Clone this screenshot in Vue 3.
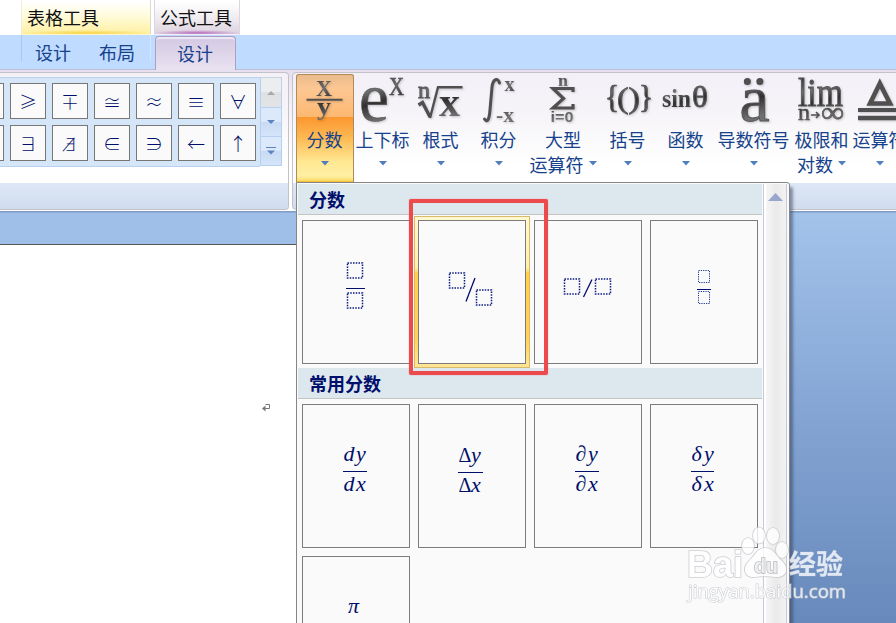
<script setup>
const symbols = [
  ['≤', '≥', '∓', '≅', '≈', '≡', '∀'],
  ['∪', '∃', '∄', '∈', '∋', '←', '↑'],
]

// Each glyph: t text, x left edge, y baseline, s size, w drawn length, b weight, f font
const serif = 'Liberation Serif'
const commands = [
  { id: 'frac', w: 58, l1: '分数', active: true,
    g: [{ t: 'X', x: 20, y: 22, s: 24, w: 16, b: 700 }, { t: 'y', x: 21, y: 41, s: 25, w: 14, b: 700 }],
    p: [{ d: 'M10.5 25.7H46.5', sw: 2 }] },
  { id: 'script', w: 58, l1: '上下标',
    g: [{ t: 'e', x: 5, y: 46.5, s: 69, w: 30, b: 400, st: 0.6 }, { t: 'X', x: 35, y: 20.5, s: 25, w: 15, b: 400, st: 0.6 }] },
  { id: 'root', w: 58, l1: '根式',
    g: [{ t: 'n', x: 6, y: 24, s: 24, w: 12, b: 400, st: 0.8 }, { t: 'x', x: 27, y: 41.5, s: 43, w: 21, b: 700 }],
    p: [{ d: 'M6.5 31L10.5 28.5L18 43', sw: 3.4 }, { d: 'M18 44L26 13.2H50.5', sw: 2.4 }] },
  { id: 'int', w: 58, l1: '积分',
    g: [{ t: 'x', x: 34.5, y: 16.5, s: 20, w: 10, b: 700 }, { t: '-x', x: 26, y: 47.5, s: 20, w: 18, b: 700 }],
    p: [{ d: 'M29.5 9C28 3.5 23 4.5 22 13L19.8 38C19 46 17 49 14.5 45', sw: 3 }] },
  { id: 'sum', w: 71, l1: '大型', l2: '运算符',
    g: [{ t: 'n', x: 30, y: 12, s: 17, w: 10, b: 700 }, { t: 'i=0', x: 22.5, y: 47.5, s: 14, w: 23, b: 700, f: 'Liberation Sans' }],
    p: [{ d: 'M45 18V14.5H25L35.5 24.5L25 34H45V30', sw: 3.2 }] },
  { id: 'brace', w: 58, l1: '括号',
    g: [{ t: '{', x: 6, y: 34, s: 31, w: 14, b: 400, st: 1 }, { t: '()', x: 18, y: 33.5, s: 29, w: 23, b: 400, st: 0.8 }, { t: '}', x: 40, y: 34, s: 31, w: 14, b: 400, st: 1 }] },
  { id: 'func', w: 58, l1: '函数',
    g: [{ t: 'sin', x: 5, y: 33, s: 25, w: 29, b: 700 }, { t: 'θ', x: 35, y: 33, s: 29, w: 16, b: 400, st: 0.9 }] },
  { id: 'accent', w: 78, l1: '导数符号',
    g: [{ t: 'a', x: 24.5, y: 46.5, s: 66, w: 30, b: 400, st: 1 }],
    p: [{ d: 'M32.3 7.5h.1M44.8 7.5h.1', sw: 7 }] },
  { id: 'limit', w: 58, l1: '极限和', l2: '对数',
    g: [{ t: 'lim', x: 5, y: 32, s: 39, w: 45, b: 400, st: 0.9 }, { t: 'n', x: 5, y: 46, s: 24, w: 12, b: 400, st: 0.6 }, { t: '∞', x: 28, y: 47.5, s: 29, w: 23, b: 400, st: 0.6 }],
    p: [{ d: 'M18 41h8M23 38l3 3l-3 3', sw: 1.6 }] },
  { id: 'oper', w: 58, l1: '运算符',
    g: [],
    p: [{ d: 'M28.8 9.5L19 29.5H39Z', sw: 4.6 }, { d: 'M7 36H51', sw: 4 }, { d: 'M7 44H51', sw: 4.6 }] },
]

const placeholders = [
  { boxes: [[44.5, 42, 15, 15], [44.5, 72, 15, 15]], line: 'M43 68.5H62' },
  { boxes: [[30.5, 52, 15, 15], [57.5, 69, 15, 15]], slash: 'M47 80.5L56 57', selected: true },
  { boxes: [[29.5, 58, 15, 15], [60.5, 58, 15, 15]], slash: 'M48.5 76L57 58.5' },
  { boxes: [[47.5, 49.5, 11, 12], [47.5, 70.5, 11, 12]], line: 'M46 69.5H60', small: true },
]

const common = [
  { a: 'd', x: 41, dy: 0, w: 24 },
  { a: 'Δ', x: 40, dy: 1, w: 25, upright: true },
  { a: '∂', x: 41, dy: 0, w: 24 },
  { a: 'δ', x: 41, dy: 0, w: 23 },
]
</script>

<template>
  <div class="window">
    <header class="titles">
      <div class="ctx table">表格工具</div>
      <div class="ctx equation">公式工具</div>
    </header>
    <nav class="tabs">
      <span class="tab t1">设计</span>
      <span class="tab t2">布局</span>
      <span class="tab current">设计</span>
    </nav>
    <section class="ribbon">
      <div class="group symbols">
        <div class="gallery">
          <div v-for="(row, r) in symbols" :key="r" class="symrow">
            <span v-for="s in row" :key="s" class="sym">{{ s }}</span>
          </div>
        </div>
        <div class="spin">
          <button class="off"><svg width="8" height="4"><path d="M0 4L4 0L8 4Z" fill="#a9a9a9" /></svg></button>
          <button><svg width="8" height="4"><path d="M0 0H8L4 4Z" fill="#5c85c0" /></svg></button>
          <button><svg width="10" height="8"><path d="M0 .5H10" stroke="#5c85c0" /><path d="M1 3.5H9L5 7.5Z" fill="#5c85c0" /></svg></button>
        </div>
      </div>
      <div class="group structures">
        <div v-for="c in commands" :key="c.id" class="cmd" :class="{ active: c.active }" :style="{ width: c.w + 'px' }">
          <svg class="icon" :width="c.w" height="54">
            <defs>
              <linearGradient :id="'g-' + c.id" gradientUnits="userSpaceOnUse" x1="0" y1="4" x2="12" y2="50">
                <stop offset="0" stop-color="#333" /><stop offset=".35" stop-color="#6e6e6e" />
                <stop offset=".62" stop-color="#303030" /><stop offset="1" stop-color="#707070" />
              </linearGradient>
            </defs>
            <text v-for="(g, i) in c.g" :key="i" :x="g.x" :y="g.y" :font-size="g.s" :font-weight="g.b"
              :font-family="g.f || serif" :textLength="g.w" lengthAdjust="spacingAndGlyphs"
              :fill="`url(#g-${c.id})`" :stroke="g.st ? '#555' : 'none'" :stroke-width="g.st || 0">{{ g.t }}</text>
            <path v-for="(p, i) in c.p || []" :key="'p' + i" :d="p.d" :stroke-width="p.sw" fill="none" stroke="#505050"
              :stroke-linecap="c.id === 'accent' || c.id === 'int' ? 'round' : 'butt'" />
          </svg>
          <div class="label">{{ c.l1 }}</div>
          <div class="label second">
            <span v-if="c.l2">{{ c.l2 }}</span>
            <svg width="8" height="5"><path d="M0 0H8L4 4.5Z" fill="#4f7dc0" /></svg>
          </div>
        </div>
      </div>
    </section>
    <main class="workspace">
      <div class="document"><svg class="mark" width="8" height="9"><path d="M3.5 .5H7.5V4.5H2" fill="none" stroke="#777" /><path d="M0 4.5L3.5 1.5V7.5Z" fill="#777" /></svg></div>
    </main>

    <div class="popup">
      <div class="list">
        <h3>分数</h3>
        <div class="cards">
          <div v-for="(p, i) in placeholders" :key="i" class="card" :class="{ selected: p.selected }">
            <svg width="106" height="142" viewBox="0 0 106 142">
              <rect v-for="(b, j) in p.boxes" :key="j" :x="b[0]" :y="b[1]" :width="b[2]" :height="b[3]" fill="none"
                :stroke="p.small ? '#1c3498' : '#0b1a80'" :stroke-width="p.small ? 1 : 1.5" :stroke-dasharray="p.small ? '1.2 1.1' : '1.5 1.25'" />
              <path v-if="p.line" :d="p.line" transform="translate(0 -1)" stroke="#000f6b" />
              <path v-if="p.slash" :d="p.slash" stroke="#000f6b" stroke-width="1.3" />
            </svg>
          </div>
        </div>
        <h3>常用分数</h3>
        <div class="cards">
          <div v-for="f in common" :key="f.a" class="card">
            <svg width="106" height="142" viewBox="0 0 106 142" class="math">
              <g :transform="`translate(${f.x - 1} ${f.dy})`">
                <text x="0.5" y="56" :class="{ up: f.upright }">{{ f.a }}</text><text x="13" y="56">y</text>
                <path :d="`M0 66.5H${f.w}`" stroke="#000f6b" />
                <text x="0.5" y="86" :class="{ up: f.upright }">{{ f.a }}</text><text x="13" y="86">x</text>
              </g>
            </svg>
          </div>
          <div class="card">
            <svg width="106" height="142" viewBox="0 0 106 142" class="math"><text x="45" y="56">π</text></svg>
          </div>
        </div>
      </div>
      <div class="scroll"><svg width="15" height="8"><path d="M0 8L7.5 0L15 8Z" fill="#98a5cc" /></svg></div>
    </div>
    <div class="highlight"></div>

    <svg class="watermark" width="170" height="90">
      <g fill="#fff" stroke="#c0c3ca" stroke-width="1.6" paint-order="stroke">
        <text x="3" y="52" font-size="36" font-weight="700" textLength="56" lengthAdjust="spacingAndGlyphs">Bai</text>
        <ellipse cx="64" cy="21" rx="6" ry="8" /><ellipse cx="75" cy="10.5" rx="6" ry="8" />
        <ellipse cx="89" cy="11" rx="6" ry="8" /><ellipse cx="98" cy="25" rx="6" ry="8" />
        <path d="M81 23C73 23 71 31 65 36C58 43 60 53 71 52C78 51 85 51 91 52C102 53 106 44 98 36C92 31 90 23 81 23Z" />
        <text x="70" y="48" font-size="21" font-weight="700" textLength="24" lengthAdjust="spacingAndGlyphs" fill="#eee" stroke="#aaaeb8">du</text>
        <text x="105" y="49" font-size="27" font-weight="700" stroke-width=".5" stroke="#aebdd6" class="cn">经验</text>
        <text x="4" y="73" font-size="18" stroke-width="1.2" textLength="158" lengthAdjust="spacingAndGlyphs" class="url">jingyan.baidu.com</text>
      </g>
    </svg>
  </div>
</template>

<style>
html, body { overflow: hidden; }
</style>
<style scoped>
* { box-sizing: border-box; }
.window { position: relative; width: 896px; height: 623px; overflow: hidden; display: flex; flex-direction: column; background: #fff; font-family: "Noto Sans CJK SC", sans-serif; font-size: 18px; color: #15428b; }
.titles { height: 35px; flex: none; display: flex; gap: 3px; padding-left: 21px; }
.ctx { color: #111; line-height: 34px; height: 35px; }
.table { width: 130px; border-right: 1px solid #dcdccf; border-left: 1px solid #efefdf; padding-left: 5px; background: radial-gradient(ellipse 65px 3px at 50% 33px, #f8d34a, transparent), linear-gradient(#fff 5%, #fffbd8 50%, #fff0a0); border-bottom: 1px solid #fff6c8; }
.equation { width: 86px; border-left: 1px solid #dcd7df; border-right: 1px solid #dcd7df; padding-left: 5px; background: radial-gradient(ellipse 43px 3px at 50% 33px, #b56fbd, transparent), linear-gradient(#fff 5%, #f1edf2 50%, #ded3df); border-bottom: 1px solid #f7edf8; }
.tabs { height: 35px; flex: none; display: flex; background: linear-gradient(#bfdbff 34px, #bebfd0 34px); padding-left: 21px; line-height: 35px; }
.t1 { width: 65px; padding-left: 13px; border-left: 1px solid #abc8ec; height: 26px; }
.t2 { width: 65px; padding-left: 13px; border-right: 1px solid #d5e5fb; height: 26px; }
.current { margin: 1px 0 0 4px; width: 81px; height: 34px; line-height: 32px; padding-left: 21px; border: 1px solid #a99fc0; border-bottom: 0; border-radius: 4px 4px 0 0; background: linear-gradient(#d3c8e2, #e9e2f0); box-shadow: inset 0 2px 1px #eee8f6; }
.ribbon { height: 142px; flex: none; display: flex; gap: 3px; background: linear-gradient(#e7deef, #f2eef6 30px, #fff 90px); padding-top: 2px; border-bottom: 1px solid #7f9cc6; }
.group { height: 138px; border: 1px solid #c2c2c8; border-radius: 0 4px 4px 0; background: linear-gradient(#f3f0f8, #f6f4f8 40px, #fff 92px, #fff 110px, #dee7f5 110px, #d0dcef); }
.symbols { width: 289px; flex: none; border-left: 0; display: flex; padding-top: 4px; }
.gallery { width: 260px; height: 90px; overflow: hidden; background: #d5e6f8; border: solid #b9d0ef; border-width: 1px 0; padding: 5px 0 0; display: flex; flex-direction: column; gap: 6px; }
.symrow { display: flex; gap: 6px; margin-left: -32px; }
.sym { width: 36px; height: 36px; flex: none; border: 1px solid #777; background: #fafafa; color: #000f6b; font: 300 18px/34px "Noto Sans CJK SC", "DejaVu Sans", sans-serif; display: flex; align-items: center; justify-content: center; }
.spin { width: 22px; height: 89px; display: flex; flex-direction: column; }
.spin button { padding: 0; width: 22px; height: 29px; border: 1px solid #b7d0f2; border-top: 0; background: linear-gradient(#dce9fb 50%, #c8daf3 50%, #d5e4f9); display: flex; align-items: center; justify-content: center; }
.spin .off { height: 31px; border-top: 1px solid #c7d3e3; background: linear-gradient(#ecedef 48%, #dfe0e2 48%, #e3e4e6); }
.structures { width: 620px; flex: none; display: flex; padding: 1px 0 0 3px; border-radius: 4px 0 0 4px; }
.cmd { flex: none; height: 109px; display: flex; flex-direction: column; align-items: center; text-align: center; }
.active { border-radius: 3px 3px 0 0; background: linear-gradient(#e8bb8b, #fdc793 15px, #fdb871 43px, #fc962f 43px, #fdbb56 65px, #ffe892 88px, #fff0a5 102px, #ffd24a 109px); box-shadow: inset 0 0 0 1px #b1895a, inset 0 -2px 0 #efc13b; }
.icon { display: block; flex: none; filter: drop-shadow(1px 1px 1px #0003); }
.label { height: 24px; line-height: 22px; flex: none; white-space: nowrap; padding-right: 1px; }
.second { display: flex; gap: 5px; align-items: center; }
.second svg { margin-top: -2px; }
.workspace { flex: 1; border-top: 1px solid #8eacd5; padding-top: 31px; background: linear-gradient(90deg, #9fbfe8 296px, transparent 296px) 0 0 / 100% 31px no-repeat, linear-gradient(#a3c3eb, #86a7d5 46%, #6789bb); }
.document { width: 296px; height: 380px; background: #fff; border-top: 1px solid #555; padding: 159px 0 0 262px; }
.mark { display: block; }
.popup { position: absolute; left: 296px; top: 182px; width: 494px; height: 450px; border: 1px solid #868686; border-radius: 0 3px 0 0; background: #fafafa; display: flex; box-shadow: 4px 4px 3px -1px #2d3a5580; padding-top: 1px; }
.list { width: 465px; padding-left: 1px; }
h3 { margin: 0; height: 31px; line-height: 30px; padding-left: 11px; background: #dde7ee; border-bottom: 1px solid #c5c5c5; font-size: 18px; color: #000f6b; }
.cards { display: flex; flex-wrap: wrap; gap: 8px; padding: 5px 0 4px 4px; }
.card { width: 108px; height: 144px; border: 1px solid #7c7c7c; background: #fafafa; }
.card svg { display: block; }
.selected { width: 116px; height: 152px; margin: -4px; padding: 3px; border: 1px solid #dab968; background: linear-gradient(#fff8cf, #ffefb0 50px, #ffe08a 54px, #ffd04a 55px, #ffd255 120px, #ffe596); }
.selected svg { background: #fafafa; border: 1px solid #7c7c7c; width: 108px; height: 144px; }
.math text { font: italic 22px "Liberation Serif", serif; fill: #000f6b; }
.math text.up { font-style: normal; font-size: 20px; }
.scroll { margin-left: 1px; border: solid #c5cadb; border-width: 0 1px; width: 24px; background: linear-gradient(90deg, #fff 2px, #f6f6f6 2px, #eaeaea 12px, #f2f2f2); padding: 9px 0 0 4px; }
.scroll svg { display: block; }
.highlight { position: absolute; left: 409px; top: 199px; width: 139px; height: 176px; border: 4px solid #ec4b4d; border-radius: 2px; box-shadow: 0 0 1px #ec4b4d; }
.watermark { position: absolute; left: 684px; top: 525px; opacity: .8; font-family: "Liberation Sans", sans-serif; }
.cn { font-family: "Noto Sans CJK SC", sans-serif; }
.url { font-family: "Open Sans", sans-serif; }
</style>
